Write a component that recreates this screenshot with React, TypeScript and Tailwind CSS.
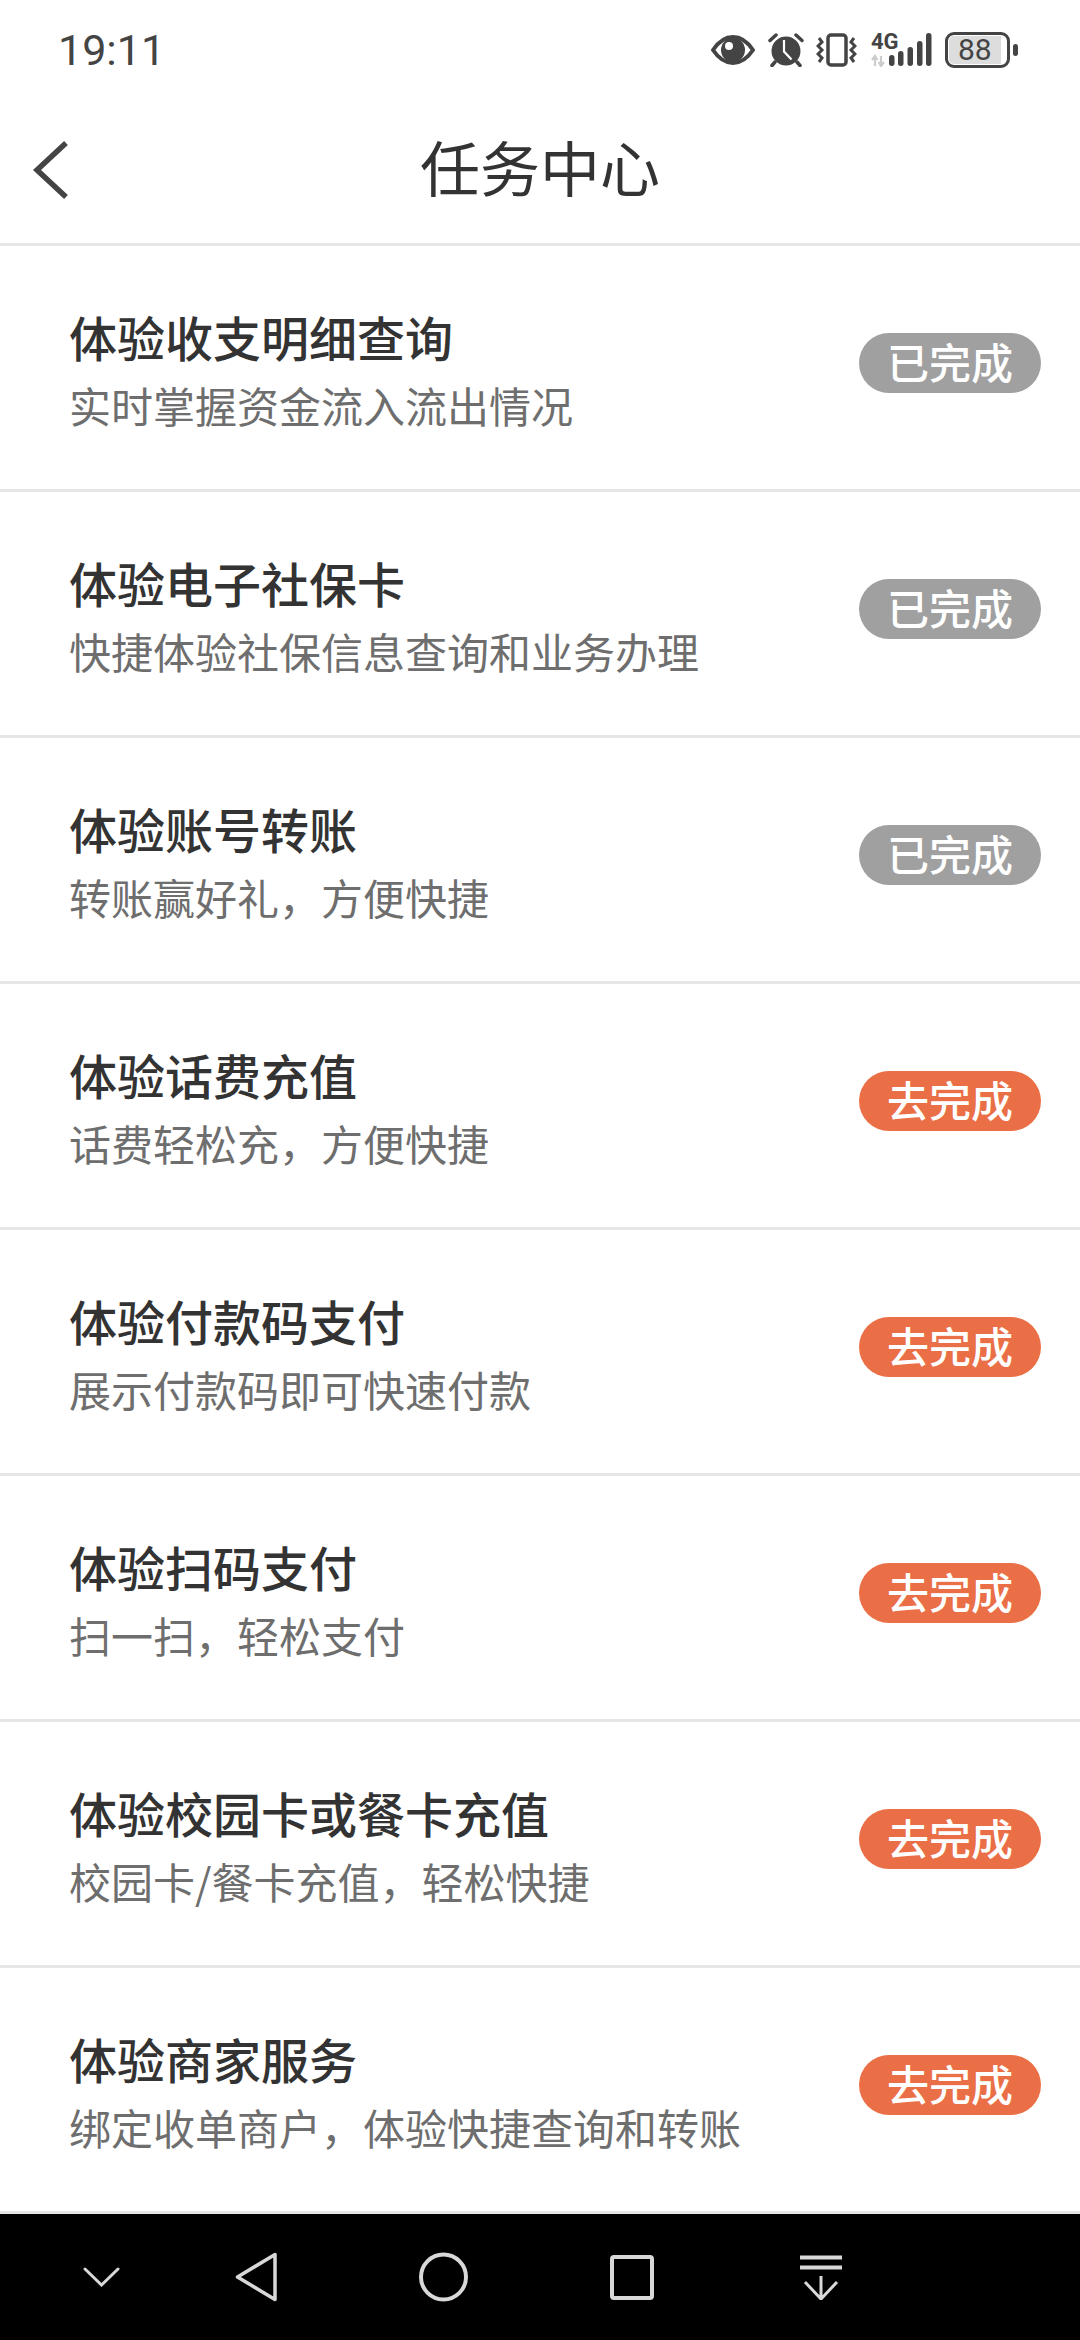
import React from 'react';

interface Task {
  title: string;
  desc: string;
  done: boolean;
}

const tasks: Task[] = [
  { title: '体验收支明细查询', desc: '实时掌握资金流入流出情况', done: true },
  { title: '体验电子社保卡', desc: '快捷体验社保信息查询和业务办理', done: true },
  { title: '体验账号转账', desc: '转账赢好礼，方便快捷', done: true },
  { title: '体验话费充值', desc: '话费轻松充，方便快捷', done: false },
  { title: '体验付款码支付', desc: '展示付款码即可快速付款', done: false },
  { title: '体验扫码支付', desc: '扫一扫，轻松支付', done: false },
  { title: '体验校园卡或餐卡充值', desc: '校园卡/餐卡充值，轻松快捷', done: false },
  { title: '体验商家服务', desc: '绑定收单商户，体验快捷查询和转账', done: false },
];

const StatusIcons = () => (
  <div className="flex items-center text-[#444]">
    {/* eye */}
    <svg width="44" height="30" viewBox="0 0 44 30">
      <path d="M2 15C8 6 14 2 22 2s14 4 20 13c-6 9-12 13-20 13S8 24 2 15Z" fill="none" stroke="currentColor" strokeWidth="4" strokeLinejoin="round" />
      <circle cx="22" cy="15" r="12" fill="currentColor" />
      <circle cx="18" cy="11" r="4" fill="#fff" />
    </svg>
    {/* alarm */}
    <svg width="36" height="34" viewBox="0 0 36 34" className="ml-[13px]">
      <circle cx="18" cy="18" r="14.500" fill="currentColor" />
      <path d="M2 7.500 8 2M34 7.500 28 2M7 29l-3 3.500M29 29l3 3.500" stroke="currentColor" strokeWidth="3.500" strokeLinecap="round" />
      <path d="M16 7v11.500l7.500 8" fill="none" stroke="#fff" strokeWidth="2.200" />
    </svg>
    {/* vibrate */}
    <svg width="41" height="34" viewBox="0 0 41 34" className="ml-[12px]">
      <rect x="12" y="2" width="18" height="30" rx="3" fill="none" stroke="currentColor" strokeWidth="3.500" />
      <path d="M3 5 6 9 2 13 6 17 2 21 6 25 3 29M38 5 35 9 39 13 35 17 39 21 35 25 38 29" fill="none" stroke="currentColor" strokeWidth="3" />
    </svg>
    {/* 4G and signal */}
    <div className="relative ml-[14px] h-[34px] w-[61px]">
      <span className="absolute left-0 top-0 font-['Roboto',sans-serif] text-[22px] font-bold leading-[18px]">4G</span>
      <svg width="61" height="34" viewBox="0 0 61 34" className="absolute left-0 top-0">
        <path d="M4 33V23M1 27l3-4 2.500 4M10 23v10M7.500 29l2.500 4 3-4" fill="none" stroke="#ccc" strokeWidth="2.200" />
        <g fill="currentColor">
          <rect x="18" y="22" width="5.500" height="11" rx="2.700" />
          <rect x="27" y="18" width="5.500" height="15" rx="2.700" />
          <rect x="36.500" y="14" width="5.500" height="19" rx="2.700" />
          <rect x="46" y="8" width="5.500" height="25" rx="2.700" />
          <rect x="55" y="0" width="5.500" height="33" rx="2.700" />
        </g>
      </svg>
    </div>
    {/* battery */}
    <div className="ml-[13px] flex items-center">
      <div className="h-[36px] w-[65px] rounded-[9px] border-[3px] border-[#444] p-[1px]">
        <div className="relative h-full w-[52px] rounded-l-[5px] bg-[#ddd]">
          <span className="absolute left-[9px] top-0 font-['Roboto',sans-serif] text-[30px] leading-[28px]">88</span>
        </div>
      </div>
      <div className="ml-[3px] h-[12px] w-[5px] rounded-full bg-[#444]" />
    </div>
  </div>
);

const TaskRow = ({ task }: { task: Task }) => (
  <div className="flex h-[246px] items-center justify-between border-b-[3px] border-[#e6e6e6] pl-[69px] pr-[39px]">
    <div>
      <div className="text-[48px] font-medium leading-[60px] text-[#333]">{task.title}</div>
      <div className="mt-[14px] text-[42px] leading-[50px] text-[#6e6e6e]">{task.desc}</div>
    </div>
    <div
      className={`mb-[9px] flex h-[60px] w-[182px] items-center justify-center rounded-full pb-[5px] text-[42px] font-medium leading-none text-white ${
        task.done ? 'bg-[#a0a0a0]' : 'bg-[#ea6f47]'
      }`}
    >
      {task.done ? '已完成' : '去完成'}
    </div>
  </div>
);

export default function App() {
  return (
    <div className="flex h-[2340px] w-[1080px] flex-col overflow-hidden bg-white font-['Noto_Sans_CJK_SC',sans-serif]">
      {/* status bar */}
      <div className="flex h-[100px] shrink-0 items-center justify-between pl-[58px] pr-[62px]">
        <span className="font-['Roboto',sans-serif] text-[43px] leading-none text-[#444]">19:11</span>
        <StatusIcons />
      </div>

      {/* header */}
      <div className="relative flex h-[146px] shrink-0 items-center justify-center border-b-[3px] border-[#e6e6e6] pb-[12px]">
        <svg width="40" height="60" viewBox="0 0 40 60" className="absolute left-[30px] top-[40px]">
          <path d="M36 3 7 30l29 27" fill="none" stroke="#444" strokeWidth="5.500" />
        </svg>
        <span className="text-[60px] leading-none text-[#333]">任务中心</span>
      </div>

      {tasks.map(t => (
        <TaskRow key={t.title} task={t} />
      ))}

      {/* nav bar */}
      <div className="flex flex-1 items-center bg-black pl-[83px] text-[#d8d8d8]">
        <svg width="37" height="20" viewBox="0 0 37 20">
          <path d="M2 2l16.500 16L35 2" fill="none" stroke="currentColor" strokeWidth="3" strokeLinecap="round" />
        </svg>
        <svg width="42" height="50" viewBox="0 0 42 50" className="ml-[115px]">
          <path d="M40 2.500v45L2.500 25Z" fill="none" stroke="currentColor" strokeWidth="3.500" strokeLinejoin="round" />
        </svg>
        <svg width="49" height="50" viewBox="0 0 49 50" className="ml-[142px]">
          <circle cx="24.500" cy="25" r="22.500" fill="none" stroke="currentColor" strokeWidth="4" />
        </svg>
        <svg width="44" height="45" viewBox="0 0 44 45" className="ml-[142px]">
          <rect x="2" y="2" width="40" height="41" rx="2" fill="none" stroke="currentColor" strokeWidth="4" />
        </svg>
        <svg width="42" height="45" viewBox="0 0 42 45" className="ml-[146px]">
          <path d="M0 2.500h42M0 12.500h42" stroke="currentColor" strokeWidth="4" />
          <path d="M21 21v23M5 27l16 17 16-17" fill="none" stroke="currentColor" strokeWidth="3" />
        </svg>
      </div>
    </div>
  );
}
